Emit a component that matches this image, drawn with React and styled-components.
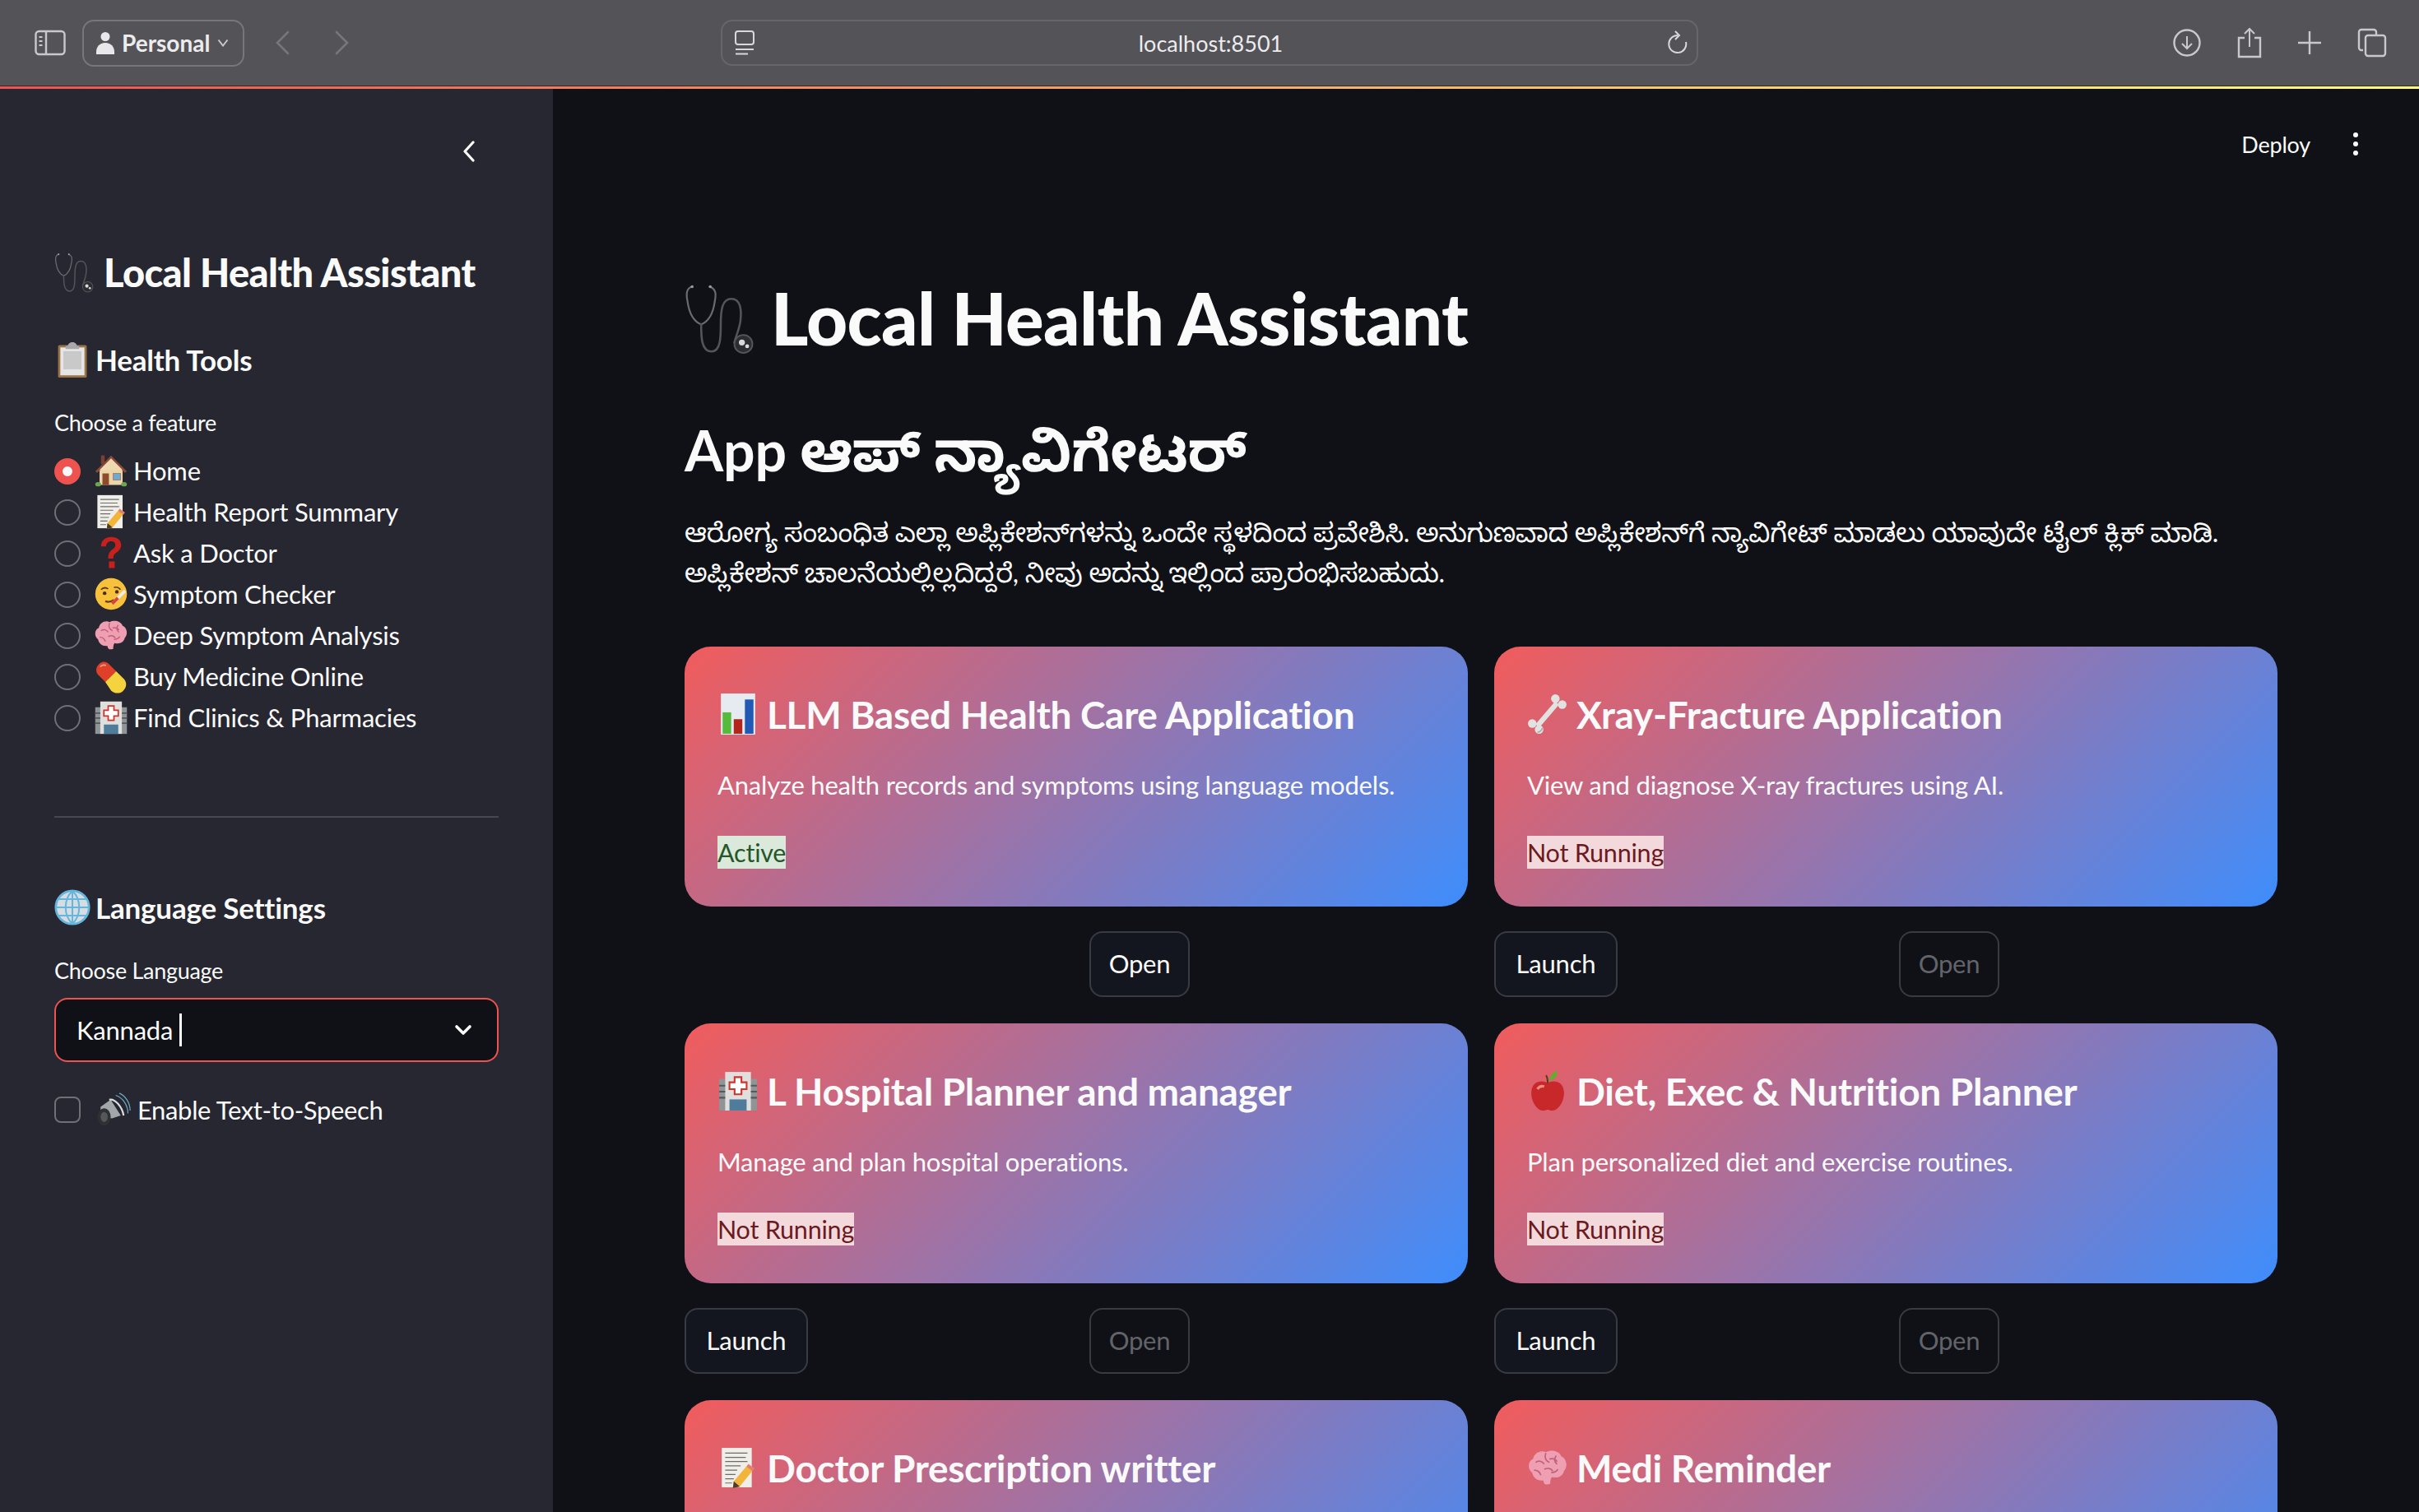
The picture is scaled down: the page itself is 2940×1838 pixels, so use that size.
import React from 'react';
import styled, { createGlobalStyle } from 'styled-components';

const GlobalStyle = createGlobalStyle`
  html, body {
    margin: 0;
    padding: 0;
    background: #0f1116;
  }
  * {
    box-sizing: border-box;
  }
  body {
    font-family: Lato, "Noto Sans", "Noto Sans Kannada", sans-serif;
    letter-spacing: -0.2px;
    color: #fafafa;
  }
`;

// emoji drawings, 48 unit box
const emojis = {
  stethoscope: (
    <g fill="none" strokeLinecap="round">
      <path d="M5 3C1 4 1 8 2 13c1 7 4 13 9 15 5-2 8-8 9-15 1-5 1-8-3-10" stroke="#6a6b70" strokeWidth="1.2" />
      <circle cx="5" cy="3" r="1" fill="#9a9ba0" />
      <circle cx="17" cy="3" r="1" fill="#9a9ba0" />
      <path d="M11 28c0 8 0 18 7 18 6 0 6-10 6-18 0-10 1-17 7-17s7 7 6 15c-1 6-3 10-4 14" stroke="#54555a" strokeWidth="1.4" />
      <circle cx="39" cy="41" r="6" fill="#2c2d31" stroke="#55565b" strokeWidth="1" />
      <circle cx="38" cy="40" r="2" fill="#d8d9dc" />
      <circle cx="41.5" cy="42.5" r="1.3" fill="#d8d9dc" />
    </g>
  ),
  clipboard: (
    <g>
      <rect x="5" y="5" width="38" height="43" rx="2" fill="#9b7446" />
      <rect x="8" y="8" width="32" height="37" fill="#e6e6e6" />
      <rect x="12" y="13" width="24" height="24" fill="#c9c9c9" />
      <path d="M18 6c0-3 3-5 6-5s6 2 6 5h3v4H15V6z" fill="#a9a9ab" />
    </g>
  ),
  house: (
    <g>
      <rect x="8" y="22" width="32" height="22" fill="#ecd4a8" />
      <path d="M2 25 24 3l22 22-3 2L24 9 5 27z" fill="#8a4a3a" />
      <path d="M24 7 40 23H8z" fill="#eed9b2" />
      <rect x="12" y="28" width="9" height="16" fill="#8d4b2b" />
      <rect x="27" y="28" width="10" height="9" fill="#6fa8d8" stroke="#9a7b55" />
      <rect x="10" y="3" width="5" height="12" fill="#7e3f33" />
      <ellipse cx="6" cy="43" rx="4" ry="3" fill="#6aa84f" />
      <ellipse cx="42" cy="43" rx="4" ry="3" fill="#6aa84f" />
    </g>
  ),
  memo: (
    <g>
      <rect x="5" y="1" width="35" height="46" fill="#efeee8" />
      <path d="M9 7h26M9 12h24M9 17h26M9 22h18M9 27h14M9 32h12M9 37h10M9 42h8" stroke="#6d6c68" strokeWidth="1.2" />
      <path d="m36 20 7 5-17 21-8 2 1-8z" fill="#f2b53a" />
      <path d="m36 20 7 5-2 3-7-5z" fill="#e57a78" />
      <path d="m19 40 7 6-8 2z" fill="#4a3d2e" />
    </g>
  ),
  question: (
    <path d="M24 2c9 0 14 5 14 11 0 5-3 8-7 11-3 2-4 4-4 8h-7c0-6 1-9 6-13 3-2 4-4 4-6 0-3-2-5-6-5s-7 3-7 7h-7C10 8 15 2 24 2zm-3 34h8v9h-8z" fill="#c8201c" />
  ),
  fever: (
    <g>
      <circle cx="24" cy="24" r="22" fill="#f8c13c" />
      <path d="M10 18c3-3 7-3 10-1M28 15c3-1 7 0 9 3" stroke="#5b3a12" strokeWidth="2" fill="none" />
      <circle cx="15" cy="23" r="2.5" fill="#4a2d0e" />
      <circle cx="32" cy="21" r="2.5" fill="#4a2d0e" />
      <path d="M16 34c4 2 8 1 12-2" stroke="#6b3a12" strokeWidth="2.5" fill="none" />
      <path d="m24 36 18-18 3 3-18 18z" fill="#e9e9ee" />
      <path d="m24 36 8-8 3 3-8 8z" fill="#d8423c" />
    </g>
  ),
  brain: (
    <g>
      <path d="M6 30C0 26 1 16 7 14c1-7 9-11 15-8 6-3 15-2 18 5 6 2 8 12 3 17-1 6-8 9-14 7-2 2-2 6-2 8-5 2-8 0-8-4-7 1-12-3-13-9z" fill="#ef9fb2" />
      <path d="M10 18c4-3 8-1 10 2M22 7c-2 5 0 9 4 11M34 10c-3 4-2 8 1 10M8 27c4 0 7 2 8 6M20 26c4-2 8-1 10 2M36 26c-2 3-5 4-8 4M26 14c4-1 7 0 9 3" stroke="#c2607c" strokeWidth="1.6" fill="none" />
    </g>
  ),
  pill: (
    <g>
      <path d="M4 12C8 3 16 2 21 7l10 10-15 15L6 22c-3-3-3-7-2-10z" fill="#e0402a" />
      <path d="m31 17 11 11c5 6 3 13-2 17s-12 3-16-1L16 32z" fill="#f5d33f" />
      <path d="M9 11c2-3 5-3 8-2" stroke="#f5a08e" strokeWidth="2" fill="none" />
    </g>
  ),
  hospital: (
    <g>
      <rect x="2" y="10" width="8" height="37" fill="#8f9497" />
      <rect x="38" y="10" width="8" height="37" fill="#8f9497" />
      <rect x="9" y="2" width="30" height="45" fill="#dfe0de" />
      <path d="M20 8h8v6h6v8h-6v6h-8v-6h-6v-8h6z" fill="#fff" stroke="#d0332c" strokeWidth="2" />
      <rect x="14" y="34" width="20" height="13" fill="#4f7c9a" />
      <path d="M2 18h7M2 25h7M2 32h7M39 18h7M39 25h7M39 32h7" stroke="#55595c" strokeWidth="2" />
    </g>
  ),
  globe: (
    <g>
      <circle cx="24" cy="24" r="22" fill="#d5dde2" stroke="#66b5dd" strokeWidth="3" />
      <path d="M2 24h44M5 13h38M5 35h38M24 2v44M24 2c-12 12-12 32 0 44M24 2c12 12 12 32 0 44" stroke="#66b5dd" strokeWidth="2.2" fill="none" />
    </g>
  ),
  speaker: (
    <g>
      <path d="M6 20 20 10l14 22-12 4-16-2z" fill="#a3a7aa" />
      <ellipse cx="11" cy="34" rx="9" ry="12" fill="#2f3033" />
      <ellipse cx="11" cy="34" rx="5" ry="7" fill="#55575a" />
      <path d="M18 10C26 8 36 20 38 32" fill="none" stroke="#d9dde0" strokeWidth="2.5" />
      <path d="M27 4c10 3 17 14 17 25M32 1c9 4 15 14 15 24" fill="none" stroke="#6fa8c4" strokeWidth="1.4" />
    </g>
  ),
  chart: (
    <g>
      <rect x="4" y="0" width="40" height="48" fill="#e6ebf1" />
      <rect x="6" y="22" width="10" height="25" fill="#56ba3d" />
      <rect x="19" y="30" width="10" height="17" fill="#b3261b" />
      <rect x="32" y="7" width="10" height="40" fill="#2159b5" />
    </g>
  ),
  bone: (
    <g fill="#e2e2e0">
      <path d="M35 11 12 38" stroke="#e2e2e0" strokeWidth="6" />
      <circle cx="33" cy="6" r="5" />
      <circle cx="41" cy="13" r="5" />
      <circle cx="6" cy="35" r="5" />
      <circle cx="14" cy="42" r="5" />
      <path d="M12 45c3 0 5-2 6-5" stroke="#a9a9a7" strokeWidth="1.5" fill="none" />
    </g>
  ),
  apple: (
    <g>
      <path d="M24 15c6-4 18-3 19 10 1 11-7 23-14 22-3 0-3-1-5-1s-2 1-5 1C12 48 4 36 5 25c1-13 13-14 19-10z" fill="#c8282a" />
      <path d="M12 22c2-3 5-4 8-3" stroke="#ef8a85" strokeWidth="3" fill="none" />
      <path d="M24 15c0-4 0-7-2-9" stroke="#5b3a1a" strokeWidth="2" fill="none" />
      <path d="M26 12c0-6 5-10 9-11 1 6-3 10-9 11z" fill="#5fae32" />
    </g>
  ),
};

function Emoji({ name, size }) {
  return (
    <EmojiSvg viewBox="0 0 48 48" $size={size} aria-hidden="true">
      {emojis[name]}
    </EmojiSvg>
  );
}

const features = [
  { emoji: 'house', label: 'Home', active: true },
  { emoji: 'memo', label: 'Health Report Summary' },
  { emoji: 'question', label: 'Ask a Doctor' },
  { emoji: 'fever', label: 'Symptom Checker' },
  { emoji: 'brain', label: 'Deep Symptom Analysis' },
  { emoji: 'pill', label: 'Buy Medicine Online' },
  { emoji: 'hospital', label: 'Find Clinics & Pharmacies' },
];

const apps = [
  {
    emoji: 'chart',
    title: 'LLM Based Health Care Application',
    desc: 'Analyze health records and symptoms using language models.',
    running: true,
  },
  {
    emoji: 'bone',
    title: 'Xray-Fracture Application',
    desc: 'View and diagnose X-ray fractures using AI.',
  },
  {
    emoji: 'hospital',
    title: 'L Hospital Planner and manager',
    desc: 'Manage and plan hospital operations.',
  },
  {
    emoji: 'apple',
    title: 'Diet, Exec & Nutrition Planner',
    desc: 'Plan personalized diet and exercise routines.',
  },
  { emoji: 'memo', title: 'Doctor Prescription writter' },
  { emoji: 'brain', title: 'Medi Reminder' },
];

function BrowserBar() {
  return (
    <Bar>
      <BarLeft>
        <svg width="38" height="32" viewBox="0 0 38 32" fill="none" stroke="#c9c9cc" strokeWidth="2.4">
          <rect x="1.5" y="2" width="35" height="28" rx="4" />
          <path d="M14 2v28" />
          <path d="M5.5 9h4M5.5 14h4M5.5 19h4" strokeWidth="2" />
        </svg>
        <Profile>
          <svg width="22" height="28" viewBox="0 0 22 28" fill="#e8e8ea">
            <circle cx="11" cy="6.5" r="5.5" />
            <path d="M0 28v-3c0-6 4-11 11-11s11 5 11 11v3z" />
          </svg>
          <span>Personal</span>
          <svg width="14" height="10" viewBox="0 0 14 10" fill="none" stroke="#c9c9cc" strokeWidth="2">
            <path d="m1.5 1.5 5.5 7 5.5-7" />
          </svg>
        </Profile>
        <NavArrows>
          <svg width="18" height="30" viewBox="0 0 18 30" fill="none" stroke="#77777b" strokeWidth="2.6" strokeLinecap="round">
            <path d="M16 2 3 15l13 13" />
          </svg>
          <svg width="18" height="30" viewBox="0 0 18 30" fill="none" stroke="#77777b" strokeWidth="2.6" strokeLinecap="round">
            <path d="m2 2 13 13L2 28" />
          </svg>
        </NavArrows>
      </BarLeft>
      <UrlBar>
        <svg width="24" height="30" viewBox="0 0 24 30" fill="none" stroke="#d8d8da" strokeWidth="2">
          <rect x="1" y="1" width="22" height="16" rx="3" />
          <path d="M1 23h22" />
          <path d="M1 28.5h15" />
        </svg>
        <UrlText>localhost:8501</UrlText>
        <svg width="26" height="30" viewBox="0 0 26 30" fill="none" stroke="#d8d8da" strokeWidth="2">
          <path d="M13 6a10.5 10.5 0 1 0 10 8" />
          <path d="m10 1 5 5-5 5" />
        </svg>
      </UrlBar>
      <BarRight>
        <svg width="34" height="34" viewBox="0 0 34 34" fill="none" stroke="#c9c9cc" strokeWidth="2.4">
          <circle cx="17" cy="17" r="15.5" />
          <path d="M17 9v15M11 18l6 6 6-6" strokeWidth="2" />
        </svg>
        <svg width="30" height="38" viewBox="0 0 30 38" fill="none" stroke="#c9c9cc" strokeWidth="2.4">
          <path d="M9 13H2v23h26V13h-7" />
          <path d="M15 24V2M9 8l6-6 6 6" strokeWidth="2" />
        </svg>
        <svg width="28" height="28" viewBox="0 0 28 28" fill="none" stroke="#c9c9cc" strokeWidth="2.4">
          <path d="M14 0v28M0 14h28" />
        </svg>
        <svg width="36" height="36" viewBox="0 0 36 36" fill="none" stroke="#c9c9cc" strokeWidth="2.4">
          <path d="M7 27H5a3 3 0 0 1-3-3V5a3 3 0 0 1 3-3h15a3 3 0 0 1 3 3v3" />
          <rect x="10" y="9" width="24" height="25" rx="3" />
        </svg>
      </BarRight>
    </Bar>
  );
}

function AppCard({ app }) {
  return (
    <CardCell>
      <Card>
        <CardTitle>
          <Emoji name={app.emoji} size={50} />
          {app.title}
        </CardTitle>
        {app.desc && <CardDesc>{app.desc}</CardDesc>}
        {app.desc && (
          <StatusRow>
            <Status $running={app.running}>{app.running ? 'Active' : 'Not Running'}</Status>
          </StatusRow>
        )}
      </Card>
      {app.desc && (
        <ButtonRow>
          <div>{!app.running && <ActionButton $w={150}>Launch</ActionButton>}</div>
          <div>
            <ActionButton $w={122} disabled={!app.running}>
              Open
            </ActionButton>
          </div>
        </ButtonRow>
      )}
    </CardCell>
  );
}

export default function App() {
  return (
    <Page>
      <GlobalStyle />
      <BrowserBar />
      <Stripe />
      <Body>
        <Sidebar>
          <CollapseRow>
            <svg width="16" height="26" viewBox="0 0 16 26" fill="none" stroke="#fafafa" strokeWidth="3.2" strokeLinecap="round" strokeLinejoin="round">
              <path d="M13 2 3 13l10 11" />
            </svg>
          </CollapseRow>
          <SideTitle>
            <Emoji name="stethoscope" size={50} />
            Local Health Assistant
          </SideTitle>
          <SideHeading $top={50}>
            <Emoji name="clipboard" size={44} />
            Health Tools
          </SideHeading>
          <FieldLabel>Choose a feature</FieldLabel>
          <RadioList>
            {features.map((f) => (
              <RadioRow key={f.label}>
                <RadioDot $active={f.active} />
                <Emoji name={f.emoji} size={42} />
                <span>{f.label}</span>
              </RadioRow>
            ))}
          </RadioList>
          <Divider />
          <SideHeading $top={84}>
            <Emoji name="globe" size={44} />
            Language Settings
          </SideHeading>
          <FieldLabel>Choose Language</FieldLabel>
          <Select>
            <span>Kannada</span>
            <Caret />
            <svg width="22" height="14" viewBox="0 0 22 14" fill="none" stroke="#fafafa" strokeWidth="3.6" strokeLinecap="round" strokeLinejoin="round">
              <path d="m3 3 8 8 8-8" />
            </svg>
          </Select>
          <CheckRow>
            <CheckBox />
            <Emoji name="speaker" size={42} />
            <span>Enable Text-to-Speech</span>
          </CheckRow>
        </Sidebar>
        <Main>
          <TopActions>
            <span>Deploy</span>
            <Kebab>
              <i />
              <i />
              <i />
            </Kebab>
          </TopActions>
          <Content>
            <PageTitle>
              <Emoji name="stethoscope" size={88} />
              Local Health Assistant
            </PageTitle>
            <SubTitle>App ಆಪ್ ನ್ಯಾವಿಗೇಟರ್</SubTitle>
            <Intro>
              ಆರೋಗ್ಯ ಸಂಬಂಧಿತ ಎಲ್ಲಾ ಅಪ್ಲಿಕೇಶನ್‌ಗಳನ್ನು ಒಂದೇ ಸ್ಥಳದಿಂದ ಪ್ರವೇಶಿಸಿ. ಅನುಗುಣವಾದ ಅಪ್ಲಿಕೇಶನ್‌ಗೆ ನ್ಯಾವಿಗೇಟ್ ಮಾಡಲು ಯಾವುದೇ ಟೈಲ್ ಕ್ಲಿಕ್ ಮಾಡಿ.
              <br />
              ಅಪ್ಲಿಕೇಶನ್ ಚಾಲನೆಯಲ್ಲಿಲ್ಲದಿದ್ದರೆ, ನೀವು ಅದನ್ನು ಇಲ್ಲಿಂದ ಪ್ರಾರಂಭಿಸಬಹುದು.
            </Intro>
            <CardGrid>
              {apps.map((app) => (
                <AppCard key={app.title} app={app} />
              ))}
            </CardGrid>
          </Content>
        </Main>
      </Body>
    </Page>
  );
}

const EmojiSvg = styled.svg`
  width: ${(p) => p.$size}px;
  height: ${(p) => p.$size}px;
  flex: none;
`;

const Page = styled.div`
  width: 2940px;
  height: 1838px;
  overflow: hidden;
  display: flex;
  flex-direction: column;
  background: #0f1116;
`;

const Bar = styled.header`
  height: 105px;
  flex: none;
  display: grid;
  grid-template-columns: 876px 1188px 1fr;
  align-items: center;
  background: #545358;
  border-bottom: 1px solid #2a2a2d;
`;

const BarLeft = styled.div`
  display: flex;
  align-items: center;
  padding-left: 42px;
  gap: 20px;
`;

const Profile = styled.div`
  width: 197px;
  height: 57px;
  display: flex;
  align-items: center;
  gap: 9px;
  padding-left: 15px;
  border: 2px solid #77777b;
  border-radius: 14px;
  font-size: 28px;
  font-weight: 700;
  letter-spacing: 0;
  color: #ececee;
`;

const NavArrows = styled.div`
  display: flex;
  align-items: center;
  gap: 55px;
  margin-left: 17px;
`;

const UrlBar = styled.div`
  height: 56px;
  display: flex;
  align-items: center;
  justify-content: space-between;
  padding: 0 10px 0 15px;
  border: 2px solid #67666b;
  border-radius: 14px;
`;

const UrlText = styled.span`
  font-size: 27px;
  letter-spacing: 0;
  color: #ececee;
`;

const BarRight = styled.div`
  display: flex;
  align-items: center;
  justify-content: flex-end;
  gap: 44px;
  padding-right: 39px;
`;

const Stripe = styled.div`
  height: 3px;
  flex: none;
  background: linear-gradient(90deg, #ef5350, #fffd80);
`;

const Body = styled.div`
  flex: 1;
  display: flex;
  min-height: 0;
`;

const Sidebar = styled.aside`
  width: 672px;
  flex: none;
  padding: 0 66px;
  background: #262730;
`;

const CollapseRow = styled.div`
  height: 32px;
  margin-top: 60px;
  display: flex;
  align-items: center;
  justify-content: flex-end;
  padding-right: 28px;
`;

const SideTitle = styled.h1`
  margin: 102px 0 0;
  display: flex;
  align-items: center;
  gap: 10px;
  height: 60px;
  padding-bottom: 3px;
  font-size: 47px;
  font-weight: 900;
  letter-spacing: -0.6px;
  white-space: nowrap;
`;

const SideHeading = styled.h3`
  margin: ${(p) => p.$top}px 0 0;
  display: flex;
  align-items: center;
  gap: 6px;
  height: 50px;
  font-size: 35px;
  font-weight: 700;
`;

const FieldLabel = styled.div`
  margin-top: 34px;
  height: 36px;
  line-height: 36px;
  font-size: 27px;
  letter-spacing: -0.3px;
`;

const RadioList = styled.div`
  margin-top: 16px;
`;

const RadioRow = styled.div`
  height: 50px;
  padding-bottom: 2px;
  display: flex;
  align-items: center;
  gap: 6px;
  font-size: 31px;
`;

const RadioDot = styled.span`
  width: 32px;
  height: 32px;
  flex: none;
  margin: 2px 10px 0 0;
  border-radius: 50%;
  border: ${(p) => (p.$active ? '10px solid #ef5350' : '2px solid #6f7076')};
  background: ${(p) => (p.$active ? '#fafafa' : 'transparent')};
`;

const Divider = styled.hr`
  margin: 94px 0 0;
  height: 2px;
  border: 0;
  background: #47484f;
`;

const Select = styled.div`
  margin-top: 15px;
  height: 78px;
  display: flex;
  align-items: center;
  padding: 0 30px 0 25px;
  border: 2px solid #ef5350;
  border-radius: 16px;
  background: #0f1116;
  font-size: 31px;
`;

const Caret = styled.span`
  width: 3px;
  height: 40px;
  margin-left: 8px;
  margin-right: auto;
  background: #fafafa;
`;

const CheckRow = styled.div`
  margin-top: 39px;
  height: 40px;
  padding-bottom: 2px;
  display: flex;
  align-items: center;
  gap: 8px;
  font-size: 31px;
  letter-spacing: -0.35px;
`;

const CheckBox = styled.span`
  width: 32px;
  height: 32px;
  flex: none;
  margin-right: 11px;
  border: 2px solid #6f7076;
  border-radius: 8px;
`;

const Main = styled.main`
  flex: 1;
  min-width: 0;
`;

const TopActions = styled.div`
  height: 40px;
  margin-top: 47px;
  padding-right: 74px;
  display: flex;
  align-items: center;
  justify-content: flex-end;
  gap: 52px;
  font-size: 27px;
`;

const Kebab = styled.div`
  display: flex;
  flex-direction: column;
  gap: 5px;
  i {
    width: 6px;
    height: 6px;
    border-radius: 50%;
    background: #fafafa;
  }
`;

const Content = styled.div`
  padding: 0 172px 0 160px;
`;

const PageTitle = styled.h1`
  margin: 143px 0 0;
  height: 100px;
  padding-bottom: 3px;
  display: flex;
  align-items: center;
  gap: 17px;
  font-size: 87px;
  font-weight: 900;
  letter-spacing: -0.6px;
  white-space: nowrap;
`;

const SubTitle = styled.h2`
  margin: 64px 0 0;
  height: 90px;
  line-height: 90px;
  font-size: 68px;
  font-weight: 700;
  white-space: nowrap;
`;

const Intro = styled.p`
  margin: 30px 0 0;
  font-size: 32px;
  line-height: 49px;
  letter-spacing: -0.25px;
  white-space: nowrap;
`;

const CardGrid = styled.div`
  margin-top: 66px;
  display: grid;
  grid-template-columns: 952px 952px;
  gap: 32px;
`;

const CardCell = styled.div`
  display: flex;
  flex-direction: column;
  gap: 30px;
`;

const Card = styled.article`
  height: 316px;
  padding: 52px 40px 0;
  border-radius: 32px;
  background: linear-gradient(135deg, #f15c5c, #3e8dfc);
`;

const CardTitle = styled.h3`
  margin: 0;
  height: 60px;
  display: flex;
  align-items: center;
  gap: 10px;
  font-size: 46px;
  font-weight: 700;
  letter-spacing: -0.3px;
  white-space: nowrap;
`;

const CardDesc = styled.p`
  margin: 32px 0 0;
  height: 48px;
  line-height: 48px;
  font-size: 31px;
`;

const StatusRow = styled.div`
  margin-top: 38px;
  display: flex;
`;

const Status = styled.span`
  height: 40px;
  line-height: 40px;
  font-size: 30.5px;
  background: ${(p) => (p.$running ? '#dbe9da' : '#f3d9dc')};
  color: ${(p) => (p.$running ? '#24562a' : '#6a1a20')};
`;

const ButtonRow = styled.div`
  display: grid;
  grid-template-columns: 460px 460px;
  gap: 32px;
  height: 80px;
`;

const ActionButton = styled.button`
  width: ${(p) => p.$w}px;
  height: 80px;
  padding: 0 0 3px;
  border: 2px solid #393b42;
  border-radius: 16px;
  background: ${(p) => (p.disabled ? 'transparent' : '#13161f')};
  color: ${(p) => (p.disabled ? '#63646a' : '#fafafa')};
  font-family: inherit;
  font-size: 31px;
  letter-spacing: -0.2px;
`;
